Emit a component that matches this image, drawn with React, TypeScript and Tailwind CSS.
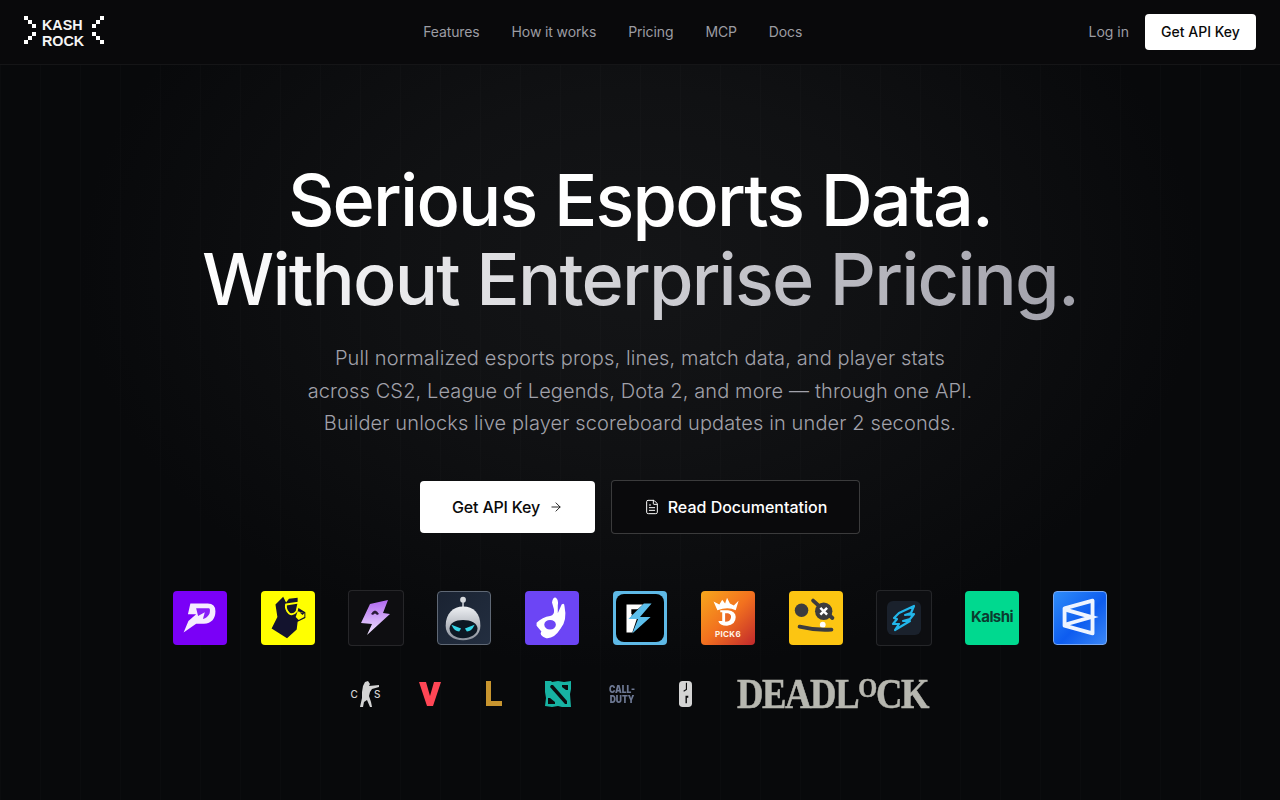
import React from "react";
import { ArrowRight, FileText } from "lucide-react";

const Tile = ({ className, children, dark }: { className: string; children: React.ReactNode; dark?: boolean }) => (
  <div className="w-14 h-14 flex items-center justify-center shrink-0">
    <div className={`relative ${dark ? "w-14 h-14" : "w-[54px] h-[54px]"} rounded overflow-hidden flex items-center justify-center ${className}`}>{children}</div>
  </div>
);

const Mark = ({ flip }: { flip?: boolean }) => (
  <svg width="12" height="28" viewBox="0 0 12 28" className={flip ? "-scale-x-100 -translate-y-[2px]" : "-translate-y-[2px]"} fill="#fff" shapeRendering="crispEdges">
    <rect x="0" y="0" width="4" height="4" />
    <rect x="4" y="4" width="4" height="4" />
    <rect x="8" y="8" width="4" height="4" />
    <rect x="8" y="16" width="4" height="4" />
    <rect x="4" y="20" width="4" height="4" />
    <rect x="0" y="24" width="4" height="4" />
  </svg>
);

const S = ({ children }: { children: React.ReactNode }) => (
  <svg width="100%" height="100%" viewBox="0 0 56 56" className="absolute inset-0">{children}</svg>
);

export default function App() {
  return (
    <div className="h-[800px] overflow-hidden bg-[#08090b] bg-[linear-gradient(90deg,rgba(255,255,255,0.012)_1px,transparent_1px),radial-gradient(ellipse_560px_400px_at_640px_270px,#141517_0%,#101113_45%,#08090b_100%)] [background-size:40px_40px,100%_100%] font-['Inter',sans-serif] text-white">
      <header className="h-[65px] border-b border-white/5 px-6 flex items-center justify-between bg-[#09090b]">
        <div className="w-[113px] flex items-center">
          <Mark />
          <div className="ml-[6px] w-[44px] translate-y-[1px] font-['Liberation_Sans',sans-serif] font-bold text-[14.3px] leading-4 text-[#f5f5f5]">
            <div>KASH</div>
            <div>ROCK</div>
          </div>
          <div className="ml-[6px]"><Mark flip /></div>
        </div>
        <nav className="flex items-center gap-8 text-sm tracking-[-0.12px] text-[#9c9ca3]">
          <a>Features</a>
          <a>How it works</a>
          <a>Pricing</a>
          <a>MCP</a>
          <a>Docs</a>
        </nav>
        <div className="flex items-center gap-4 text-sm">
          <a className="text-[#9c9ca3]">Log in</a>
          <a className="h-9 w-[111px] rounded bg-white text-[#0a0a0a] font-medium flex items-center justify-center">Get API Key</a>
        </div>
      </header>

      <main className="flex flex-col items-center pt-[95px]">
        <h1 className="text-center text-[72px] leading-[79px] font-medium tracking-[-1.8px] whitespace-nowrap">
          <div>Serious Esports Data.</div>
          <div className="inline-block pb-3 -mb-3 bg-gradient-to-r from-white to-[#a1a1aa] bg-clip-text text-transparent">Without Enterprise Pricing.</div>
        </h1>
        <p className="mt-6 text-center text-[20px] leading-[32.5px] font-light tracking-[0.12px] text-[#a1a1aa]">
          Pull normalized esports props, lines, match data, and player stats
          <br />
          across CS2, League of Legends, Dota 2, and more — through one API.
          <br />
          Builder unlocks live player scoreboard updates in under 2 seconds.
        </p>

        <div className="mt-10 flex items-center gap-4">
          <a className="h-[52px] w-[175px] rounded bg-white text-[#0a0a0a] font-medium tracking-[-0.2px] flex items-center justify-center gap-[9px]">
            Get API Key <ArrowRight size={14} strokeWidth={1.5} />
          </a>
          <a className="h-[54px] w-[249px] rounded border border-white/20 bg-[#0a0a0c] font-medium flex items-center justify-center gap-2">
            <FileText size={16} strokeWidth={1.5} /> Read Documentation
          </a>
        </div>

        <div className="mt-14 flex gap-8">
          <Tile className="bg-[#7a00f7]">
            <S>
              <path d="M18 13H36Q44 13 44 21Q44 33 32 34H24L11 43L16 31L24 24H15.500Z" fill="#f6ecff" />
              <path d="M24 18H37Q39 18 38 23Q36 28 31 29L33 22L26 26Z" fill="#8a1ff7" />
            </S>
          </Tile>
          <Tile className="bg-[#ffff00]">
            <S>
              <path d="M23 6L26 12L29 8L38 7L38 17L46 22L46 28L38 32L37 40L27 49L11 39L17 27L15 14Z" fill="#13132e" />
              <path d="M26 14L39 12L37 21Q33 26 29 23Q25 19 26 14Z" fill="#13132e" stroke="#ffff00" strokeWidth="2" />
              <path d="M38 21L45 23L45 27L39 30L36 27Z" fill="#ffff00" />
              <path d="M40 22L45 23L43 25Z" fill="#13132e" />
            </S>
          </Tile>
          <Tile dark className="bg-[#0e0e11] border border-white/10">
            <svg width="56" height="56" viewBox="0 0 56 56" className="absolute -inset-px">
              <defs>
                <linearGradient id="ub" x1="0" y1="0" x2="0" y2="1">
                  <stop offset="0" stopColor="#b067f0" />
                  <stop offset="1" stopColor="#f0e6ff" />
                </linearGradient>
              </defs>
              <path d="M22 14L40 10L35 23L42 24L19 45L24 34L13 33Z" fill="url(#ub)" />
              <path d="M23 24Q27 17 31 24L29 25Q27 22 25 25Z" fill="#2a1a3a" />
            </svg>
          </Tile>
          <Tile className="bg-gradient-to-br from-[#1a2332] to-[#232e40] border border-[#5f6875]">
            <svg width="54" height="54" viewBox="0 0 56 56" className="absolute -inset-px">
              <defs>
                <linearGradient id="dome" x1="0" y1="0" x2="0" y2="1">
                  <stop offset="0" stopColor="#eef0f3" />
                  <stop offset="1" stopColor="#8b919c" />
                </linearGradient>
              </defs>
              <line x1="27" y1="10" x2="27" y2="18" stroke="#aab0b8" strokeWidth="2" />
              <circle cx="27" cy="9" r="3" fill="#d7dade" />
              <path d="M9 36C9 23 17 16 27 16C38 16 45 23 45 36C45 46 37 51 27 51C17 51 9 46 9 36Z" fill="url(#dome)" />
              <path d="M13 39C13 33 19 30 27 30C35 30 42 33 42 39C42 45 35 49 27 49C19 49 13 45 13 39Z" fill="#0d1824" />
              <path d="M15 35L25 39L23 42Q18 42 15 35Z" fill="#35d6e8" />
              <path d="M39 35L29 39L31 42Q36 42 39 35Z" fill="#35d6e8" />
            </svg>
          </Tile>
          <Tile className="bg-[#6c45f5]">
            <S>
              <path d="M12 33Q18 27 26 26Q31 25 30 19L28 12Q29 6 32 7Q35 9 34 15L34 23L38 14Q41 12 41 16Q44 30 37 39Q30 50 22 49Q14 46 17 42L12 36Z" fill="#fff" />
              <ellipse cx="26" cy="35" rx="6" ry="5" fill="#6c45f5" />
            </S>
          </Tile>
          <Tile className="bg-[#5eb9e6]">
            <div className="absolute inset-[3px] rounded-lg bg-black" />
            <S>
              <path d="M14 14H31L20 24L18 28H25L20 43H14Z" fill="#fff" />
              <path d="M19 19H27L21 24H19Z" fill="#000" />
              <path d="M40 13H32L16 29H26L20 44L39 27H28Z" fill="#5cbfec" />
            </S>
          </Tile>
          <Tile className="bg-[linear-gradient(135deg,#f7a81c_0%,#f2711f_50%,#c0282c_100%)]">
            <S>
              <path d="M13 11L19 14L22 9L25 13L27 7L30 13L34 15L39 10L36 20Q28 16 17 20Z" fill="#fff" />
              <path d="M20 20H28Q36 21 36 27Q36 35 27 36Q19 36 18 31L22 31V22H20Z" fill="#fff" />
              <path d="M25 23H28Q32 24 31 28Q30 32 25 32Z" fill="#ea6a25" />
            </S>
            <span className="absolute left-0 right-0 bottom-[6px] text-center text-[8px] leading-[9px] font-bold tracking-[0.3px] text-[#fff5e8]">PICK6</span>
          </Tile>
          <Tile className="bg-[#fcc512]">
            <S>
              <circle cx="13" cy="20" r="7" fill="#3c3c3e" />
              <circle cx="36" cy="21" r="9" fill="#3c3c3e" />
              <path d="M25 10L45 28" stroke="#3c3c3e" strokeWidth="4" strokeLinecap="round" />
              <path d="M32.500 17.500L39.500 24.500M39.500 17.500L32.500 24.500" stroke="#fff" strokeWidth="2.600" />
              <circle cx="35" cy="35" r="3" fill="#fff" />
              <path d="M11 37Q27 41 44 40" stroke="#3c3c3e" strokeWidth="4" strokeLinecap="round" fill="none" />
            </S>
          </Tile>
          <Tile dark className="bg-[#0d0e11] border border-white/10">
            <div className="w-[34px] h-[34px] rounded-md bg-[#1a212c] flex items-center justify-center">
              <svg width="28" height="28" viewBox="0 0 28 28">
                <path d="M9 9L24 2L21 9L15 11L24 10L20 15L13 17L20 17L5 26L9 20L3 20L7 15L4 14Z" fill="none" stroke="#22b6ea" strokeWidth="2.200" strokeLinejoin="round" />
              </svg>
            </div>
          </Tile>
          <Tile className="bg-[#00d98f]">
            <span className="font-bold text-[15px] tracking-[-0.6px] text-[#0b3b30]">Kalshi</span>
          </Tile>
          <Tile className="bg-[linear-gradient(135deg,#2f8cf8_0%,#0d5cf0_55%,#3a86f5_100%)] border border-[#76a8f6]">
            <svg width="54" height="54" viewBox="0 0 56 56" className="absolute -inset-px">
              <path d="M12 18L41 10V44L12 36Z" fill="none" stroke="#eef4ff" strokeWidth="4" strokeLinejoin="round" />
              <path d="M12 19L40 27L12 35" fill="none" stroke="#eef4ff" strokeWidth="4" />
            </svg>
          </Tile>
        </div>

        <div className="mt-[26px] flex items-center gap-8 h-11">
          <div className="relative w-8 h-8 flex items-center justify-center">
            <svg width="32" height="32" viewBox="0 0 32 32">
              <path d="M13 8L15 4L18 3L20 6L19 8L29 7L29 9L22 11L20 14L19 18L21 24L22 29H20L17 22L14 24L13 29H10L12 20L12 14Z" fill="#d4d4d4" />
            </svg>
            <span className="absolute left-[1px] top-[11px] text-[10px] leading-[11px] font-medium text-[#d4d4d4]">C</span>
            <span className="absolute right-[1px] top-[11px] text-[10px] leading-[11px] font-medium text-[#d4d4d4]">S</span>
          </div>
          <div className="w-8 flex justify-center">
            <svg width="24" height="26" viewBox="0 0 24 26">
              <path d="M1 1H8L12 15L16 1H23L15 25H9Z" fill="#ff4655" />
            </svg>
          </div>
          <div className="w-8 flex justify-center">
            <svg width="18" height="25" viewBox="0 0 18 25">
              <path d="M1 0H6V20H17V25H1Z" fill="#c8952f" />
            </svg>
          </div>
          <div className="w-8 flex justify-center">
            <svg width="28" height="28" viewBox="0 0 28 28">
              <path d="M1 1H7L8 2L14 1L20 2L27 1V9L26 14L27 27H18L14 26L8 27L1 26L2 18L1 12Z" fill="#17b3a3" />
              <path d="M7 5H9L23 21V24H21L6 7Z" fill="#0b0c0e" />
              <path d="M18 5H24V10H22L18 7Z" fill="#0b0c0e" />
              <path d="M4 18L6 18L11 22V24H4Z" fill="#0b0c0e" />
            </svg>
          </div>
          <div className="w-8 flex flex-col items-center font-black text-[10px] leading-[10px] text-[#6d7893] [transform:scaleX(0.85)]">
            <span>CALL-</span>
            <span>DUTY</span>
          </div>
          <div className="w-8 flex justify-center">
            <svg width="13" height="26" viewBox="0 0 14 28">
              <path d="M4 0H10Q14 0 14 4V24Q14 28 10 28H4Q0 28 0 24V4Q0 0 4 0Z" fill="#d4d4d4" />
              <path d="M8 2V9L5 11" stroke="#08090b" strokeWidth="1.200" fill="none" />
              <path d="M7 16H10V18H8.500V24H7Z" fill="#08090b" />
            </svg>
          </div>
          <div className="w-[197px] h-8 flex items-center justify-center font-['Liberation_Serif',serif] font-bold text-[42px] leading-8 tracking-[-1.5px] text-[#b7b7b0] whitespace-nowrap [transform:scaleX(0.87)] [-webkit-text-stroke:0.6px_#b7b7b0]">
            DEADL<span className="relative -top-[6px] text-[28px]">O</span>CK
          </div>
        </div>
      </main>
    </div>
  );
}
